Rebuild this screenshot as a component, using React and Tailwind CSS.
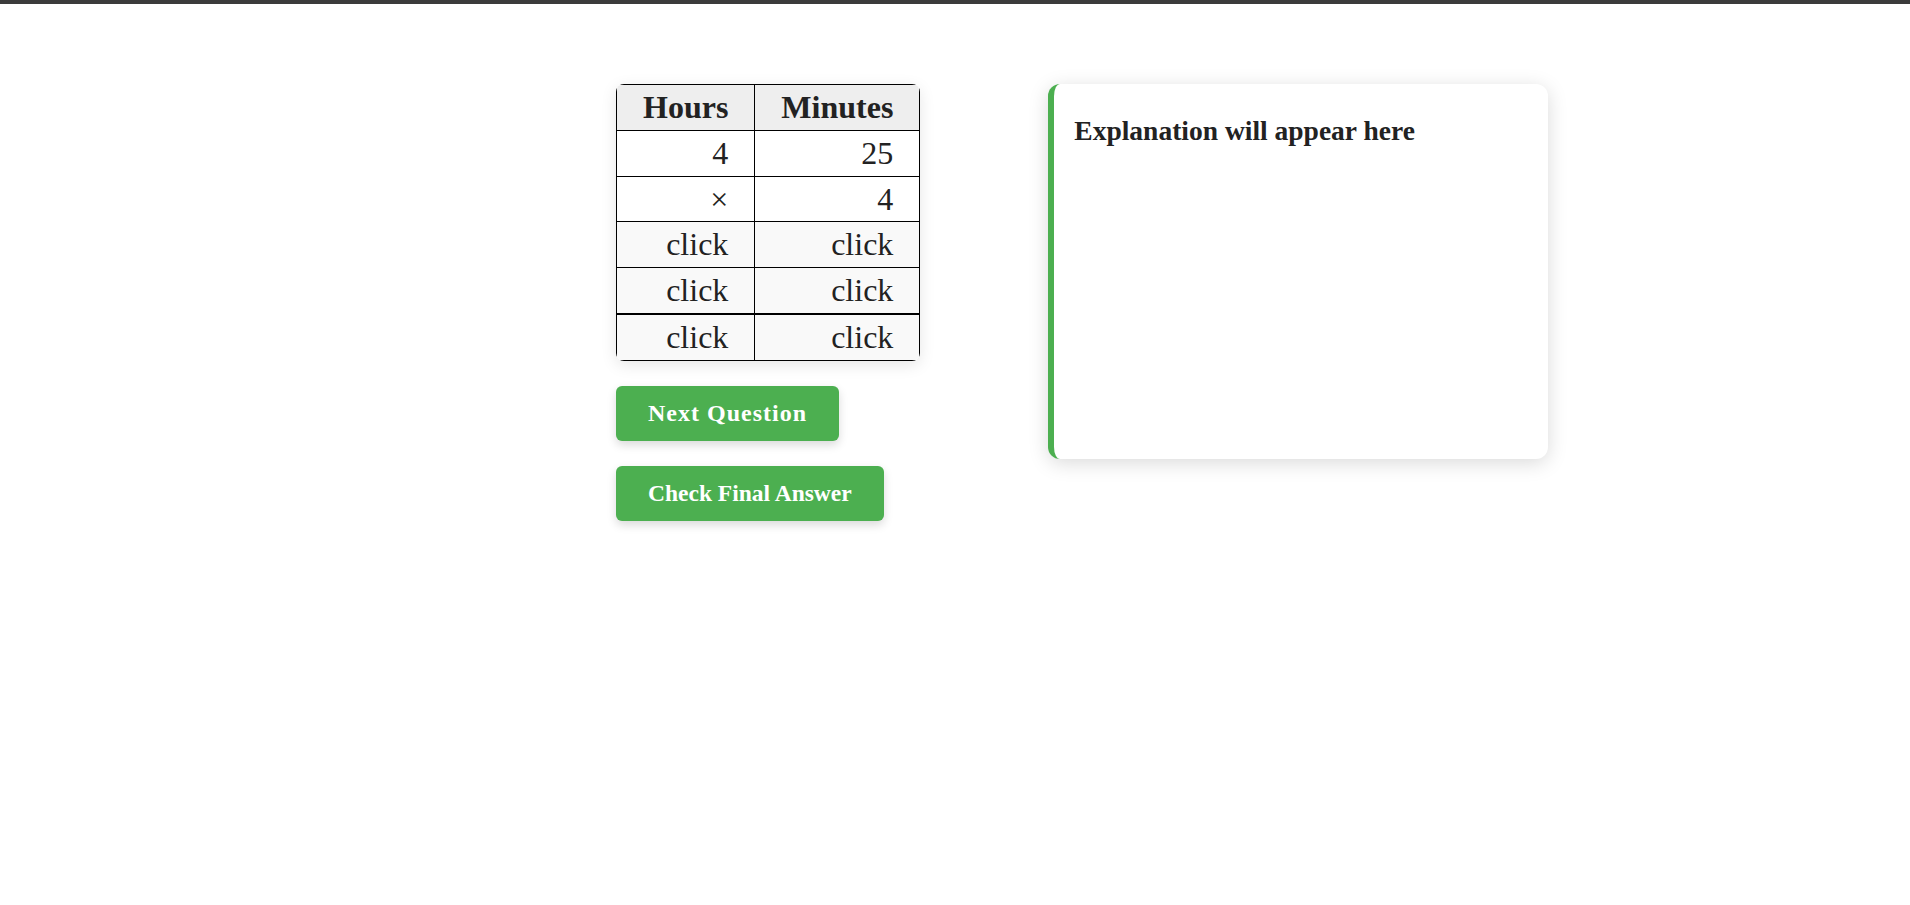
export default function App() {
  const rows = [
    { h: '4', m: '25', shade: false },
    { h: '×', m: '4', shade: false },
    { h: 'click', m: 'click', shade: true },
    { h: 'click', m: 'click', shade: true },
    { h: 'click', m: 'click', shade: true, thick: true },
  ]

  return (
    <div className="min-h-screen bg-white text-[#222] font-['Liberation_Serif',serif]">
      {/* top bar */}
      <div className="h-[4px] bg-[#3b3b3b]" />

      <div className="flex items-start gap-[128px] pt-[80px] pl-[616px]">
        {/* left column: table + buttons */}
        <div className="flex flex-col items-start gap-[25px]">
          <div className="rounded-lg overflow-hidden shadow-[0_4px_16px_rgba(0,0,0,0.1)]">
            <table className="border-collapse text-[32px] leading-[1.15]">
              <thead>
                <tr className="bg-[#eeeeee]">
                  <th className="border border-black px-[26px] py-[4px] font-bold">Hours</th>
                  <th className="border border-black px-[26px] py-[4px] font-bold">Minutes</th>
                </tr>
              </thead>
              <tbody>
                {rows.map((r, i) => (
                  <tr key={i} className={r.shade ? 'bg-[#f9f9f9]' : 'bg-white'}>
                    <td className={`border border-black px-[26px] py-[4px] text-right ${r.thick ? 'border-t-2' : ''}`}>{r.h}</td>
                    <td className={`border border-black px-[26px] py-[4px] text-right ${r.thick ? 'border-t-2' : ''}`}>{r.m}</td>
                  </tr>
                ))}
              </tbody>
            </table>
          </div>

          <button className="h-[55px] px-8 rounded-md bg-[#4caf50] text-white font-bold text-[24px] tracking-[1px] shadow-[0_4px_10px_rgba(0,0,0,0.15)]">
            Next Question
          </button>
          <button className="h-[55px] px-8 rounded-md bg-[#4caf50] text-white font-bold text-[23.5px] shadow-[0_4px_10px_rgba(0,0,0,0.15)]">
            Check Final Answer
          </button>
        </div>

        {/* explanation panel */}
        <div className="w-[500px] h-[375px] rounded-xl bg-white border-l-[6px] border-[#4caf50] pl-[20px] pt-[31px] shadow-[0_4px_20px_rgba(0,0,0,0.15)]">
          <h3 className="text-[27.5px] font-bold leading-[1.15]">Explanation will appear here</h3>
        </div>
      </div>
    </div>
  )
}
